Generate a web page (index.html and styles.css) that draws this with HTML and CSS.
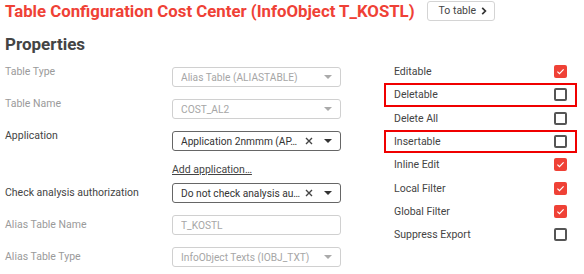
FILE: index.html
```html
<!DOCTYPE html>
<html>
<head>
<meta charset="utf-8">
<link rel="stylesheet" href="styles.css">
</head>
<body>
<div class="page">
  <div class="header">
    <h1 class="title">Table Configuration Cost Center (InfoObject T_KOSTL)</h1>
    <button class="to-table">To table <svg class="chev" width="6" height="8" viewBox="0 0 6 8"><path d="M1.2 0.8 L4.4 4 L1.2 7.2" fill="none" stroke="#333" stroke-width="1.7"/></svg></button>
  </div>
  <h2 class="section">Properties</h2>
  <div class="body">
    <div class="form">
      <div class="row">
        <div class="label muted">Table Type</div>
        <div class="select disabled"><span class="val">Alias Table (ALIASTABLE)</span><span class="arrow"></span></div>
      </div>
      <div class="row">
        <div class="label muted">Table Name</div>
        <div class="select disabled"><span class="val">COST_AL2</span><span class="arrow"></span></div>
      </div>
      <div class="row">
        <div class="label">Application</div>
        <div class="field">
          <div class="select active"><span class="val">Application 2nmmm (AP…</span><svg class="clear" width="8" height="8" viewBox="0 0 8 8"><path d="M1 1 L7 7 M7 1 L1 7" stroke="#444" stroke-width="1.4"/></svg><span class="arrow"></span></div>
          <a class="add-link" href="#">Add application…</a>
        </div>
      </div>
      <div class="row center">
        <div class="label">Check analysis authorization</div>
        <div class="select active"><span class="val">Do not check analysis au…</span><svg class="clear" width="8" height="8" viewBox="0 0 8 8"><path d="M1 1 L7 7 M7 1 L1 7" stroke="#444" stroke-width="1.4"/></svg><span class="arrow"></span></div>
      </div>
      <div class="row center">
        <div class="label muted">Alias Table Name</div>
        <div class="select disabled"><span class="val">T_KOSTL</span></div>
      </div>
      <div class="row center">
        <div class="label muted">Alias Table Type</div>
        <div class="select disabled"><span class="val">InfoObject Texts (IOBJ_TXT)</span><span class="arrow"></span></div>
      </div>
    </div>
    <div class="flags">
      <div class="flag"><span>Editable</span><span class="cb checked"><svg width="13" height="13" viewBox="0 0 13 13"><path d="M3.4 6.6 L5.5 8.6 L9.6 4.4" fill="none" stroke="#fff" stroke-width="1.2"/></svg></span></div>
      <div class="flag marked"><span>Deletable</span><span class="cb"></span></div>
      <div class="flag"><span>Delete All</span><span class="cb"></span></div>
      <div class="flag marked"><span>Insertable</span><span class="cb"></span></div>
      <div class="flag"><span>Inline Edit</span><span class="cb checked"><svg width="13" height="13" viewBox="0 0 13 13"><path d="M3.4 6.6 L5.5 8.6 L9.6 4.4" fill="none" stroke="#fff" stroke-width="1.2"/></svg></span></div>
      <div class="flag"><span>Local Filter</span><span class="cb checked"><svg width="13" height="13" viewBox="0 0 13 13"><path d="M3.4 6.6 L5.5 8.6 L9.6 4.4" fill="none" stroke="#fff" stroke-width="1.2"/></svg></span></div>
      <div class="flag"><span>Global Filter</span><span class="cb checked"><svg width="13" height="13" viewBox="0 0 13 13"><path d="M3.4 6.6 L5.5 8.6 L9.6 4.4" fill="none" stroke="#fff" stroke-width="1.2"/></svg></span></div>
      <div class="flag"><span>Suppress Export</span><span class="cb"></span></div>
    </div>
  </div>
</div>
</body>
</html>
```

FILE: styles.css
```css
* { box-sizing: border-box; }
html, body { margin: 0; padding: 0; background: #fff; }
body { font-family: Roboto, "Liberation Sans", sans-serif; font-size: 10.5px; color: #444; }
.page { padding: 0 0 0 5px; }
.header { display: flex; align-items: center; gap: 12px; height: 22px; }
.title { margin: 0; font-size: 16.8px; font-weight: 700; color: #ef4136; line-height: 22px; white-space: nowrap; }
.to-table { display: flex; align-items: center; gap: 5px; height: 20px; width: 68px; padding: 0 0 0 11px; margin-top: -1px; border: 1px solid #d4d4d4; border-radius: 3px; background: #fff; font-family: inherit; font-size: 10.5px; color: #444; }
.chev { display: block; }
.section { margin: 11px 0 0; font-size: 17px; font-weight: 700; color: #444; line-height: 22px; }
.body { display: flex; margin-top: 5px; }
.form { width: 336px; padding-top: 2px; }
.row { display: flex; align-items: flex-start; min-height: 32px; }
.row.center { align-items: center; }
.row .label { width: 167px; line-height: 20px; flex: none; }
.row:not(.center) .select { margin-top: 5px; }
.label.muted { color: #9a9a9a; }
.field { width: 169px; }
.select { width: 169px; height: 20px; display: flex; align-items: center; border: 1px solid #d0d0d0; border-radius: 3px; padding: 0 8px 0 8px; font-size: 10.2px; }
.select.disabled { color: #a6a6a6; }
.select.active { border-color: #666; color: #333; }
.val { flex: 1; white-space: nowrap; overflow: hidden; }
.clear { display: block; margin-right: 11px; }
.arrow { width: 0; height: 0; border-left: 4px solid transparent; border-right: 4px solid transparent; border-top: 4px solid #aaa; }
.active .arrow { border-top-color: #333; }
.add-link { display: block; color: #444; text-decoration: underline; margin: 12px 0 0 0; line-height: 14px; }
.flags { margin-left: 43px; width: 193px; }
.flag { display: flex; align-items: center; justify-content: space-between; height: 23.3px; padding: 0 8px; border: 2px solid transparent; }
.flag.marked { border-color: #f00000; }
.cb { width: 13px; height: 13px; border: 2px solid #555; border-radius: 2px; display: block; }
.cb.checked { border: none; background: #ef4136; }
.cb svg { display: block; }
```
